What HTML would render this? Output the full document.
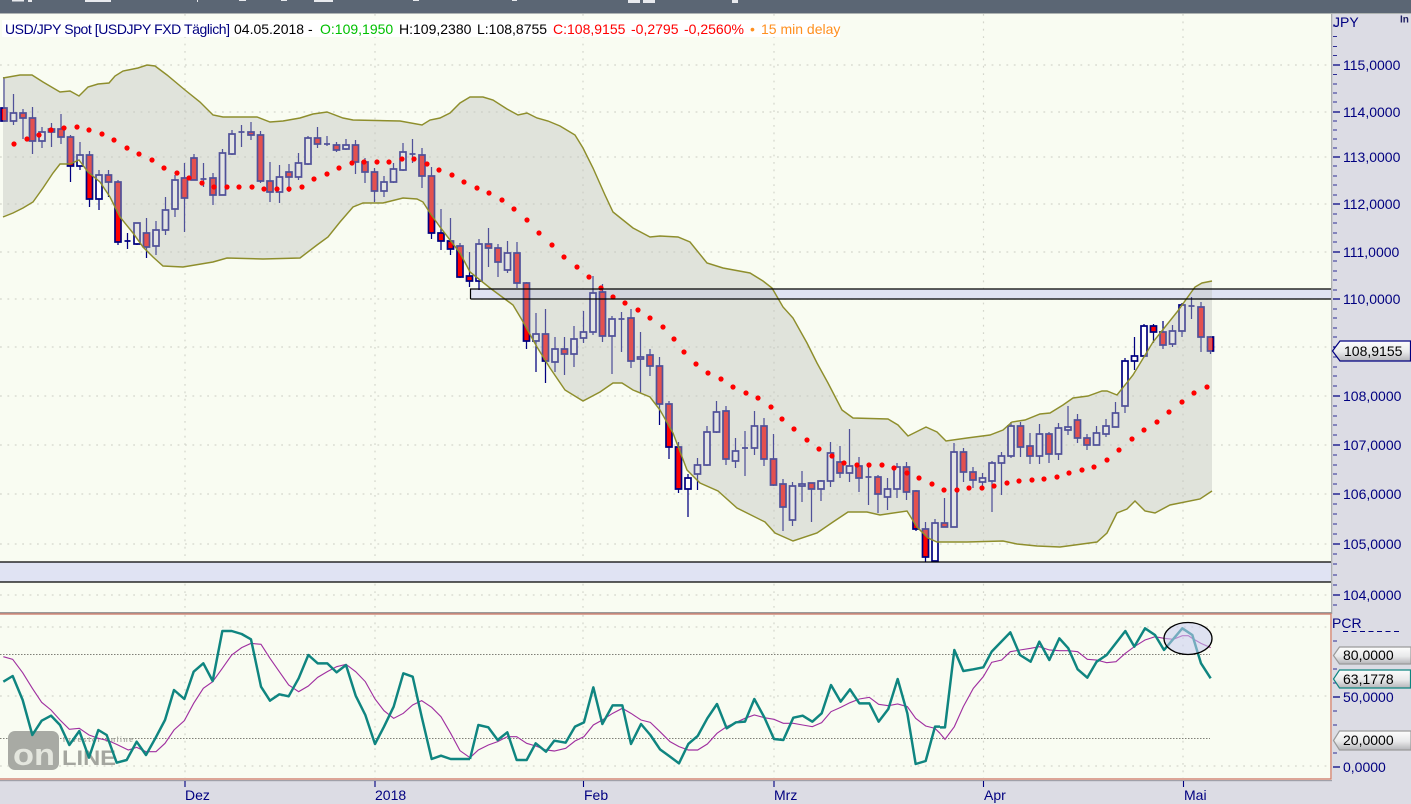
<!DOCTYPE html>
<html><head><meta charset="utf-8"><title>USD/JPY Spot</title>
<style>
html,body{margin:0;padding:0;background:#f9fcf2;overflow:hidden}
svg{display:block;font-family:"Liberation Sans",sans-serif}
</style></head><body>
<svg width="1411" height="804" viewBox="0 0 1411 804" xmlns="http://www.w3.org/2000/svg">
<defs><linearGradient id="tg" x1="0" y1="0" x2="0" y2="1"><stop offset="0" stop-color="#fdfdfd"/><stop offset=".55" stop-color="#e8e9ea"/><stop offset="1" stop-color="#b4b4b8"/></linearGradient></defs>
<rect width="1411" height="804" fill="#f9fcf2"/>
<!-- top bar -->
<rect width="1411" height="13" fill="#5b6674"/><rect y="13" width="1411" height="1" fill="#aeb3b2"/>
<g fill="#e8eaee"><rect x="12" width="12" height="1.5"/><rect x="28" width="4" height="2"/><rect x="85" width="26" height="2"/><rect x="197" width="1" height="2"/><rect x="239" width="7" height="1"/><rect x="281" width="6" height="1"/><rect x="314" width="19" height="2"/><rect x="413" width="6" height="1"/><rect x="512" width="5" height="1"/><rect x="628" width="12" height="3"/><rect x="643" width="12" height="3"/><rect x="732" width="6" height="3"/></g>
<!-- grid -->
<g stroke="#d4d6cc" stroke-width="1.2" stroke-dasharray="1.8 5.6" fill="none">
<path d="M0 65H1331M0 112H1331M0 157H1331M0 204H1331M0 252H1331M0 299H1331M0 347H1331M0 396H1331M0 445H1331M0 494H1331M0 544H1331M0 595H1331"/>
<path d="M185 14V612M375 14V612M583 14V612M774 14V612M983.500 14V612M1183 14V612"/>
</g>
<!-- zone fills -->
<rect x="470" y="289" width="862" height="10" fill="#e0e3f3"/>
<rect x="0" y="562" width="1332" height="20" fill="#e0e3f3"/>
<!-- candles -->
<path fill="none" stroke="#000080" stroke-width="1.25" d="M4 77V122M13.500 94V125M23 109V139M32.500 107V154M42 127V148M51.500 123V147M61 114V144M70.500 135V182M80 142V170M89.500 151V207M99 170V210M108.500 170V197M118 180V245M127.500 233V249M137 223V245M146.500 218V258M156 221V255M165.500 197V235M175 175V217M184.500 163V232M194 154V180M203.500 163V187M213 173V205M222.500 149V195M232 130V155M241.500 125V147M251 122V140M260.500 131V183M270 162V202M279.500 165V203M289 164V192M298.500 153V180M308 136V165M317.500 127V148M327 136V146M336.500 142V152M346 139V150M355.500 140V174M365 158V183M374.500 168V202M384 176V197M393.500 163V183M403 143V171M412.500 139V163M422 148V188M431.500 167V239M441 209V250M450.500 218V255M460 243V278M469.500 252V287M479 239V290M488.500 228V267M498 244V277M507.500 241V273M517 242V288M526.500 282V349M536 313V372M545.500 309V383M555 337V372M564.500 337V375M574 326V367M583.500 311V343M593 276V335M602.500 284V342M612 316V374M621.500 312V352M631 309V368M640.500 332V393M650 349V376M659.500 357V425M669 401V459M678.500 442V493M688 474V517M697.500 458V490M707 426V466M716.500 401V433M726 406V465M735.500 438V468M745 431V476M754.500 411V455M764 418V466M773.500 434V486M783 479V531M792.500 482V526M802 471V502M811.500 483V522M821 480V501M830.500 442V487M840 446V478M849.500 429V482M859 457V492M868.500 465V505M878 475V513M887.500 478V510M897 463V498M906.500 462V500M916 490V531M925.500 522V562M935 519V562M944.500 498V527M954 443V527M963.500 448V482M973 467V488M982.500 473V490M992 461V512M1001.500 452V495M1011 422V458M1020.500 422V457M1030 433V464M1039.500 424V464M1049 432V463M1058.500 423V460M1068 406V435M1077.500 414V443M1087 434V450M1096.500 426V445M1106 419V437M1115.500 402V427M1125 358V413M1134.500 337V370M1144 324V357M1153.500 324V343M1163 321V349M1172.500 325V347M1182 303V337M1191.500 297V319M1201 302V352M1210.500 336V354"/>
<path fill="none" stroke="#000080" stroke-width="1.8" d="M124.500 241h6M200.500 179h6M238.500 132h6M324 144h6M409.500 154h6M618.500 319h6M742 448h6M865.500 477h6M1188.500 306h6"/>
<path fill="#ffffff" stroke="#000080" stroke-width="1.7" d="M10.500 113h6v8h-6zM39 132h6v9h-6zM77 155h6v11h-6zM96 175h6v24h-6zM134 223h6v21h-6zM153 230h6v16h-6zM162.500 210h6v20h-6zM172 180h6v29h-6zM219.500 153h6v42h-6zM229 134h6v20h-6zM276.500 177h6v15h-6zM295.500 163h6v14h-6zM305 138h6v26h-6zM343 145h6v4h-6zM381 182h6v9h-6zM390.500 169h6v13h-6zM400 152h6v18h-6zM476 244h6v37h-6zM504.500 253h6v17h-6zM533 334h6v7h-6zM552 349h6v13h-6zM571 339h6v15h-6zM580.500 332h6v6h-6zM590 293h6v39h-6zM609 319h6v17h-6zM637.500 357h6v2h-6zM685 478h6v11h-6zM694.500 465h6v9h-6zM704 432h6v33h-6zM713.500 412h6v20h-6zM732.500 451h6v10h-6zM751.500 426h6v22h-6zM789.500 486h6v34h-6zM799 484h6v2h-6zM818 481h6v8h-6zM827.500 453h6v28h-6zM846.500 466h6v7h-6zM884.500 489h6v8h-6zM894 467h6v22h-6zM932 523h6v38h-6zM951 452h6v75h-6zM979.500 478h6v4h-6zM989 463h6v18h-6zM998.500 456h6v7h-6zM1008 426h6v30h-6zM1036.500 434h6v22h-6zM1055.500 428h6v26h-6zM1065 427h6v3h-6zM1093.500 433h6v12h-6zM1103 426h6v8h-6zM1112.500 413h6v14h-6zM1122 361h6v45h-6zM1131.500 356h6v5h-6zM1141 326h6v30h-6zM1169.500 331h6v13h-6zM1179 305h6v26h-6z"/>
<path fill="#ff0000" stroke="#000080" stroke-width="1.7" d="M1 108h6v13h-6zM20 113h6v5h-6zM29.500 118h6v23h-6zM48.500 129h6v3h-6zM58 129h6v8h-6zM67.500 137h6v29h-6zM86.500 155h6v44h-6zM105.500 175h6v7h-6zM115 182h6v60h-6zM143.500 233h6v14h-6zM181.500 178h6v20h-6zM191 158h6v22h-6zM210 178h6v17h-6zM248 132h6v3h-6zM257.500 135h6v46h-6zM267 181h6v11h-6zM286 172h6v5h-6zM314.500 138h6v6h-6zM333.500 145h6v5h-6zM352.500 145h6v17h-6zM362 162h6v10h-6zM371.500 172h6v19h-6zM419 155h6v21h-6zM428.500 176h6v57h-6zM438 233h6v8h-6zM447.500 241h6v8h-6zM457 246h6v31h-6zM466.500 276h6v5h-6zM485.500 244h6v4h-6zM495 248h6v14h-6zM514 253h6v30h-6zM523.500 283h6v58h-6zM542.500 334h6v27h-6zM561.500 349h6v5h-6zM599.500 292h6v44h-6zM628 318h6v43h-6zM647 355h6v11h-6zM656.500 366h6v38h-6zM666 404h6v43h-6zM675.500 447h6v42h-6zM723 411h6v48h-6zM761 426h6v33h-6zM770.500 459h6v26h-6zM780 484h6v23h-6zM808.500 483h6v6h-6zM837 462h6v11h-6zM856 466h6v12h-6zM875 477h6v17h-6zM903.500 467h6v25h-6zM913 491h6v38h-6zM922.500 529h6v28h-6zM941.500 523h6v4h-6zM960.500 452h6v20h-6zM970 472h6v8h-6zM1017.500 426h6v21h-6zM1027 446h6v10h-6zM1046 434h6v20h-6zM1074.500 420h6v18h-6zM1084 438h6v7h-6zM1150.500 326h6v6h-6zM1160 332h6v13h-6zM1198 307h6v30h-6zM1207.500 337h6v14h-6z"/>
<!-- bollinger band -->
<polygon fill="#bec0bc" fill-opacity=".42" points="3,78 20,75 32,75 43,82 60,92 70,91 79,96 88,87 98,84 109,83 115,76 123,71 138,68 147,65 155,66 167,75 185,90 200,102 213,115 223,117 257,117 270,122 283,121 300,118 313,114 327,112 343,118 353,120 400,121 422,125 430,120 440,118 450,113 460,103 470,97 483,97 493,100 507,109 518,115 527,113 537,118 548,121 560,126 575,135 583,148 593,168 605,195 613,212 623,220 633,228 650,237 660,236 678,237 690,242 707,263 723,268 750,273 763,281 772,288 783,307 793,318 807,343 817,363 828,383 842,410 853,418 888,419 898,425 908,436 926,427 937,432 946,441 967,438 990,435 1003,430 1012,422 1025,420 1040,414 1050,413 1063,405 1073,398 1088,396 1102,391 1107,391 1117,395 1133,375 1153,342 1177,312 1195,287 1202,283 1212,281 1212,491 1200,499 1170,505 1155,513 1145,511 1135,501 1127,509 1117,513 1107,533 1097,542 1060,547 1037,546 1017,544 1003,541 967,542 937,542 928,538 917,527 907,511 880,515 867,512 848,512 833,522 817,533 793,541 775,533 765,522 737,508 718,491 700,483 687,470 673,433 660,410 650,397 633,390 622,383 613,383 600,392 583,401 565,390 550,368 537,347 522,320 513,305 490,288 470,272 460,253 440,227 430,213 423,202 417,199 403,198 383,203 363,203 353,207 340,222 328,237 317,245 300,258 263,259 227,258 213,262 183,267 163,266 153,257 143,247 133,233 120,217 110,197 100,182 88,172 79,160 70,164 60,164 53,173 43,188 33,202 23,208 13,213 3,217"/>
<g fill="none" stroke="#8e8e2c" stroke-width="1.45">
<polyline points="3,78 20,75 32,75 43,82 60,92 70,91 79,96 88,87 98,84 109,83 115,76 123,71 138,68 147,65 155,66 167,75 185,90 200,102 213,115 223,117 257,117 270,122 283,121 300,118 313,114 327,112 343,118 353,120 400,121 422,125 430,120 440,118 450,113 460,103 470,97 483,97 493,100 507,109 518,115 527,113 537,118 548,121 560,126 575,135 583,148 593,168 605,195 613,212 623,220 633,228 650,237 660,236 678,237 690,242 707,263 723,268 750,273 763,281 772,288 783,307 793,318 807,343 817,363 828,383 842,410 853,418 888,419 898,425 908,436 926,427 937,432 946,441 967,438 990,435 1003,430 1012,422 1025,420 1040,414 1050,413 1063,405 1073,398 1088,396 1102,391 1107,391 1117,395 1133,375 1153,342 1177,312 1195,287 1202,283 1212,281"/>
<polyline points="3,217 13,213 23,208 33,202 43,188 53,173 60,164 70,164 79,160 88,172 100,182 110,197 120,217 133,233 143,247 153,257 163,266 183,267 213,262 227,258 263,259 300,258 317,245 328,237 340,222 353,207 363,203 383,203 403,198 417,199 423,202 430,213 440,227 460,253 470,272 490,288 513,305 522,320 537,347 550,368 565,390 583,401 600,392 613,383 622,383 633,390 650,397 660,410 673,433 687,470 700,483 718,491 737,508 765,522 775,533 793,541 817,533 833,522 848,512 867,512 880,515 907,511 917,527 928,538 937,542 967,542 1003,541 1017,544 1037,546 1060,547 1097,542 1107,533 1117,513 1127,509 1135,501 1145,511 1155,513 1170,505 1200,499 1212,491"/>
</g>
<!-- SAR dots -->
<path fill="none" stroke="#ff0000" stroke-width="5.2" stroke-linecap="round" d="M14 144h.01M27 139h.01M39 135h.01M51 130h.01M64 128h.01M77 127h.01M89 130h.01M102 134h.01M114 140h.01M127 148h.01M139 154h.01M152 160h.01M164 168h.01M177 173h.01M189 178h.01M202 183h.01M214 187h.01M227 187h.01M239 187h.01M252 187h.01M264 189h.01M277 189h.01M289 189h.01M302 187h.01M314 179h.01M327 174h.01M339 168h.01M352 163h.01M364 162h.01M377 162h.01M389 162h.01M402 159h.01M414 159h.01M427 164h.01M439 170h.01M452 175h.01M464 182h.01M477 188h.01M489 193h.01M502 200h.01M514 209h.01M527 220h.01M539 233h.01M552 245h.01M564 257h.01M577 267h.01M589 277h.01M601 288h.01M613 297h.01M625 303h.01M638 310h.01M650 318h.01M663 327h.01M674 339h.01M684 352h.01M696 364h.01M708 373h.01M721 379h.01M733 387h.01M746 393h.01M758 398h.01M771 407h.01M782 419h.01M794 429h.01M807 440h.01M819 449h.01M832 456h.01M844 463h.01M857 465h.01M869 465h.01M882 465h.01M894 468h.01M907 473h.01M919 478h.01M932 484h.01M944 490h.01M957 490h.01M969 488h.01M982 488h.01M994 486h.01M1007 483h.01M1019 481h.01M1032 480h.01M1044 479h.01M1057 477h.01M1069 473h.01M1082 470h.01M1094 467h.01M1107 460h.01M1119 450h.01M1132 439h.01M1144 430h.01M1157 422h.01M1169 412h.01M1182 402h.01M1194 393h.01M1207 387h.01"/>
<!-- zone lines -->
<g fill="none" stroke="#000" stroke-width="1.2">
<path d="M470.500 299V289H1332M470.500 299H1332"/>
<path d="M0 562H1332M0 582H1332"/>
</g>
<!-- legend -->
<rect x="2" y="20" width="838" height="17" fill="#ffffff"/>
<g font-size="14">
<text x="5" y="34" fill="#000080" textLength="225">USD/JPY Spot [USDJPY FXD Täglich]</text>
<text x="234" y="34" fill="#000">04.05.2018 -</text>
<text x="320" y="34" fill="#00c000">O:109,1950</text>
<text x="399" y="34" fill="#000">H:109,2380</text>
<text x="477" y="34" fill="#000">L:108,8755</text>
<text x="553" y="34" fill="#ff0000">C:108,9155</text>
<text x="631" y="34" fill="#ff0000">-0,2795</text>
<text x="684" y="34" fill="#ff0000">-0,2560%</text>
<text x="750" y="34" fill="#ff9020">•</text>
<text x="761" y="34" fill="#ff9020">15 min delay</text>
</g>
<!-- right axis -->
<rect x="1332" y="14" width="79" height="790" fill="#dcdce4"/>
<rect x="0" y="780" width="1411" height="24" fill="#dcdce4"/>
<rect x="1331" y="14" width="1.3" height="600" fill="#aeb0b0"/>
<g fill="none" stroke="#000080" stroke-width="1">
<path stroke-opacity=".8" d="M1333 26h4M1333 36.500h4M1333 46.500h4M1333 55.500h4M1333 74.500h4M1333 84h4M1333 93h4M1333 102h4M1333 121h4M1333 130h4M1333 139h4M1333 148h4M1333 166h4M1333 176h4M1333 185h4M1333 195h4M1333 214h4M1333 223h4M1333 233h4M1333 242h4M1333 261h4M1333 271h4M1333 280h4M1333 290h4M1333 309h4M1333 318h4M1333 328h4M1333 337h4M1333 357h4M1333 367h4M1333 376h4M1333 386h4M1333 406h4M1333 416h4M1333 425h4M1333 435h4M1333 455h4M1333 465h4M1333 474h4M1333 484h4M1333 504h4M1333 514h4M1333 524h4M1333 534h4M1333 554h4M1333 564h4M1333 575h4M1333 585h4M1333 605h4M1333 641h4M1333 669h4M1333 683h4M1333 711h4M1333 725h4M1333 753h4"/>
<path stroke-width="1.2" d="M1333 65h7M1333 112h7M1333 157h7M1333 204h7M1333 252h7M1333 299h7M1333 347h7M1333 396h7M1333 445h7M1333 494h7M1333 544h7M1333 595h7M1333 697h7M1333 767h7"/>
<path stroke-dasharray="5 3.500" d="M1343 631.500H1400"/>
</g>
<g font-size="14" fill="#000080">
<text x="1333" y="27">JPY</text>
<text x="1343" y="70">115,0000</text>
<text x="1343" y="117">114,0000</text>
<text x="1343" y="162">113,0000</text>
<text x="1343" y="209">112,0000</text>
<text x="1343" y="257">111,0000</text>
<text x="1343" y="304">110,0000</text>
<text x="1343" y="401">108,0000</text>
<text x="1343" y="450">107,0000</text>
<text x="1343" y="499">106,0000</text>
<text x="1343" y="549">105,0000</text>
<text x="1343" y="600">104,0000</text>
<text x="1332" y="628">PCR</text>
<text x="1343" y="702">50,0000</text>
<text x="1343" y="772">0,0000</text>
<text x="185" y="800">Dez</text>
<text x="375" y="800">2018</text>
<text x="584" y="800">Feb</text>
<text x="774" y="800">Mrz</text>
<text x="984" y="800">Apr</text>
<text x="1184" y="800">Mai</text>
</g>
<text x="1400" y="22.500" font-size="10" font-weight="bold" fill="#1c1c60">In</text>
<!-- lower panel -->
<rect x="0" y="612" width="1332" height="1.5" fill="#9a9a9a"/>
<rect x="0" y="780" width="1332" height="1.2" fill="#a0a0a8"/>
<rect x="-2" y="614" width="1333" height="165" fill="#f9fcf2"/>
<g stroke="#d4d6cc" stroke-width="1.2" stroke-dasharray="1.8 5.600" fill="none">
<path d="M0 627H1331M0 696H1331M0 766H1331M185 615V778M375 615V778M583 615V778M774 615V778M983.500 615V778M1183 615V778"/>
</g>
<path d="M0 654.500H1210M0 738.500H1210" stroke="#808078" stroke-width="1" stroke-dasharray="1.5 1.500" fill="none"/>
<!-- watermark -->
<g>
<rect x="8" y="731" width="51" height="39" rx="7" fill="#a8aaa4"/>
<text x="13" y="765" font-size="31" font-weight="bold" fill="#e4e6de" textLength="42" lengthAdjust="spacingAndGlyphs">on</text>
<text x="62" y="765" font-size="21" font-weight="bold" fill="#a4a69f" textLength="54" lengthAdjust="spacingAndGlyphs">LINE</text>
<text x="63" y="742" font-size="7" font-weight="bold" fill="#a8aaa2" textLength="70">Investor online</text>
</g>
<!-- PCR lines -->
<g transform="translate(0,600) scale(.33333)" fill="none" stroke="#a030a0" stroke-width="3.4">
<polyline points="10,170 38,178 68,218 97,265 125,307 153,330 180,360 208,388 238,385 267,405 295,415 325,422 350,433 385,450 410,442 438,455 468,455 495,430 522,390 553,362 581,310 610,265 638,245 667,205 695,165 725,143 753,130 783,133 810,175 838,215 866,255 896,275 925,258 953,232 982,215 1010,200 1038,193 1067,215 1096,245 1125,297 1152,332 1181,355 1210,340 1238,315 1265,302 1295,322 1323,350 1352,400 1380,452 1410,473"/>
</g>
<g transform="translate(470,600) scale(.33333)" fill="none" stroke="#a030a0" stroke-width="3.4">
<polyline points="0,473 25,450 55,435 83,425 112,410 140,410 170,430 197,438 228,450 253,453 287,445 315,423 342,410 370,375 397,360 428,340 457,325 483,340 513,360 541,367 570,395 600,425 627,440 655,450 683,450 712,432 741,400 770,380 798,367 825,355 853,345 883,353 912,358 940,370 970,370 998,375 1027,380 1055,368 1083,335 1112,322 1140,308 1168,297 1198,292 1226,313 1255,317 1283,312 1312,320 1337,355 1367,378 1395,385 1410,400"/>
</g>
<g transform="translate(940,600) scale(.33333)" fill="none" stroke="#a030a0" stroke-width="3.4">
<polyline points="0,400 15,418 43,380 70,320 100,265 130,230 155,187 185,180 211,155 240,150 272,145 298,140 328,150 358,152 385,152 413,155 442,178 470,180 500,188 528,185 556,160 583,140 615,120 645,110 672,115 700,118 727,107 745,107 757,115 783,130 812,143"/>
</g>
<g transform="translate(0,600) scale(.33333)" fill="none" stroke="#0f8580" stroke-width="7.4" stroke-linejoin="round">
<polyline points="10,245 38,228 68,300 97,405 125,362 153,347 180,375 208,435 238,393 267,473 295,390 320,405 350,488 380,480 410,425 438,465 466,415 495,360 522,270 553,297 581,215 610,190 638,243 667,93 695,93 725,102 753,118 783,260 810,302 838,283 866,289 896,235 925,165 953,190 982,190 1010,217 1038,195 1067,287 1096,345 1125,432 1152,380 1181,320 1210,220 1238,230 1265,350 1295,477 1323,467 1352,477 1410,477"/>
</g>
<g transform="translate(470,600) scale(.33333)" fill="none" stroke="#0f8580" stroke-width="7.4" stroke-linejoin="round">
<polyline points="0,477 25,375 55,382 83,420 112,397 140,480 170,480 197,430 228,455 253,422 287,428 315,380 342,367 370,262 397,372 428,316 457,316 483,432 513,372 541,405 570,448 600,470 627,490 655,432 683,408 712,355 741,312 770,385 798,367 825,365 853,297 883,352 912,417 940,420 970,353 998,347 1027,365 1055,340 1083,255 1112,305 1140,268 1168,310 1198,310 1226,365 1255,327 1283,237 1312,340 1337,492 1367,483 1395,380 1410,380"/>
</g>
<g transform="translate(940,600) scale(.33333)" fill="none" stroke="#0f8580" stroke-width="7.4" stroke-linejoin="round">
<polyline points="0,382 15,382 43,150 70,213 100,208 130,202 155,155 211,97 240,165 272,185 298,125 328,180 358,115 385,145 413,208 442,233 470,185 500,165 556,93 583,140 615,85 645,105 672,150 727,85 757,105 783,190 812,235"/>
</g>
<ellipse cx="1188" cy="638.500" rx="24" ry="16" fill="#c8ccf0" fill-opacity=".55" stroke="#000" stroke-width="1.3"/>
<!-- lower panel border -->
<rect x="-2" y="614" width="1333" height="165" fill="none" stroke="#d08070" stroke-width="1.4"/>
<!-- x ticks -->
<path d="M185 781V787M375 781V787M583.500 781V787M774 781V787M983.500 781V787M1183.500 781V787" stroke="#000080" stroke-width="1.100" fill="none"/>
<!-- tags -->
<polygon points="1332.500,351 1340,341 1410.500,341 1410.500,361 1340,361" fill="url(#tg)" stroke="#000080" stroke-width="1.200"/>
<text x="1344" y="356" font-size="14" fill="#000">108,9155</text>
<polygon points="1333.500,655.500 1339.500,647 1411,647 1411,664 1339.500,664" fill="url(#tg)" stroke="#9a9a9a" stroke-width="1.200"/>
<text x="1343" y="660" font-size="14" fill="#000">80,0000</text>
<polygon points="1333.500,679 1339.500,670 1410.500,670 1410.500,688 1339.500,688" fill="url(#tg)" stroke="#0f8580" stroke-width="1.200"/>
<text x="1343" y="684" font-size="14" fill="#000">63,1778</text>
<polygon points="1333.500,740.500 1339.500,731 1411,731 1411,750 1339.500,750" fill="url(#tg)" stroke="#9a9a9a" stroke-width="1.200"/>
<text x="1343" y="745" font-size="14" fill="#000">20,0000</text>
</svg>
</body></html>
